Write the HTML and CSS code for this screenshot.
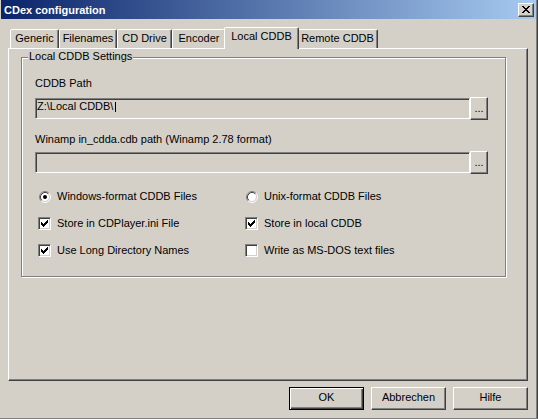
FILE: index.html
```html
<!DOCTYPE html>
<html>
<head>
<meta charset="utf-8">
<title>CDex configuration</title>
<link rel="stylesheet" href="styles.css">
</head>
<body>
<div class="window">
  <div class="titlebar">
    <span class="title">CDex configuration</span>
    <span class="close">
      <svg width="14" height="12" viewBox="0 0 14 12" shape-rendering="crispEdges">
        <path d="M3 2h2v1h1v1h2v-1h1v-1h2v1h-1v1h-1v1h-1v1h1v1h1v1h1v1h-2v-1h-1v-1h-2v1h-1v1h-2v-1h1v-1h1v-1h1v-1h-1v-1h-1v-1h-1z" fill="#000"/>
      </svg>
    </span>
  </div>
  <div class="content">
    <div class="tabs">
      <div class="tab w-gen">Generic</div>
      <div class="tab w-fil">Filenames</div>
      <div class="tab w-cdd">CD Drive</div>
      <div class="tab w-enc">Encoder</div>
      <div class="tab w-loc active">Local CDDB</div>
      <div class="tab w-rem">Remote CDDB</div>
    </div>
    <div class="panel">
      <div class="group">
        <div class="caption">Local CDDB Settings</div>
        <div class="label first">CDDB Path</div>
        <div class="pathrow">
          <div class="field">Z:\Local CDDB\<span class="caret"></span></div>
          <div class="browse">...</div>
        </div>
        <div class="label second">Winamp in_cdda.cdb path (Winamp 2.78 format)</div>
        <div class="pathrow tight">
          <div class="field"></div>
          <div class="browse">...</div>
        </div>
        <div class="options">
          <div class="opt">
            <svg class="radio" width="12" height="12" viewBox="0 0 12 12">
              <circle cx="6" cy="6" r="4.5" fill="#fff"/>
              <path d="M2.11 9.89 A5.5 5.5 0 0 1 9.89 2.11" fill="none" stroke="#808080" stroke-width="1"/>
              <path d="M9.89 2.11 A5.5 5.5 0 0 1 2.11 9.89" fill="none" stroke="#fff" stroke-width="1"/>
              <path d="M2.82 9.18 A4.5 4.5 0 0 1 9.18 2.82" fill="none" stroke="#404040" stroke-width="1"/>
              <path d="M9.18 2.82 A4.5 4.5 0 0 1 2.82 9.18" fill="none" stroke="#D4D0C8" stroke-width="1"/>
              <circle cx="6" cy="6" r="2" fill="#000"/>
            </svg>
            <span>Windows-format CDDB Files</span>
          </div>
          <div class="opt">
            <svg class="radio" width="12" height="12" viewBox="0 0 12 12">
              <circle cx="6" cy="6" r="4.5" fill="#fff"/>
              <path d="M2.11 9.89 A5.5 5.5 0 0 1 9.89 2.11" fill="none" stroke="#808080" stroke-width="1"/>
              <path d="M9.89 2.11 A5.5 5.5 0 0 1 2.11 9.89" fill="none" stroke="#fff" stroke-width="1"/>
              <path d="M2.82 9.18 A4.5 4.5 0 0 1 9.18 2.82" fill="none" stroke="#404040" stroke-width="1"/>
              <path d="M9.18 2.82 A4.5 4.5 0 0 1 2.82 9.18" fill="none" stroke="#D4D0C8" stroke-width="1"/>
            </svg>
            <span>Unix-format CDDB Files</span>
          </div>
          <div class="opt">
            <span class="check">
              <svg width="7" height="7" viewBox="0 0 7 7" shape-rendering="crispEdges"><path d="M6 0h1v3h-1v1h-1v1h-1v1h-1v1h-1v-1h-1v-1h-1v-3h1v1h1v1h1v-1h1v-1h1v-1h1z" fill="#000"/></svg>
            </span>
            <span>Store in CDPlayer.ini File</span>
          </div>
          <div class="opt">
            <span class="check">
              <svg width="7" height="7" viewBox="0 0 7 7" shape-rendering="crispEdges"><path d="M6 0h1v3h-1v1h-1v1h-1v1h-1v1h-1v-1h-1v-1h-1v-3h1v1h1v1h1v-1h1v-1h1v-1h1z" fill="#000"/></svg>
            </span>
            <span>Store in local CDDB</span>
          </div>
          <div class="opt">
            <span class="check">
              <svg width="7" height="7" viewBox="0 0 7 7" shape-rendering="crispEdges"><path d="M6 0h1v3h-1v1h-1v1h-1v1h-1v1h-1v-1h-1v-1h-1v-3h1v1h1v1h1v-1h1v-1h1v-1h1z" fill="#000"/></svg>
            </span>
            <span>Use Long Directory Names</span>
          </div>
          <div class="opt">
            <span class="check"></span>
            <span>Write as MS-DOS text files</span>
          </div>
        </div>
      </div>
    </div>
    <div class="buttons">
      <div class="btn default">OK</div>
      <div class="btn">Abbrechen</div>
      <div class="btn">Hilfe</div>
    </div>
  </div>
</div>
</body>
</html>
```
FILE: styles.css
```css
* { box-sizing: border-box; }
html, body { margin: 0; padding: 0; }
body {
  width: 538px;
  height: 419px;
  overflow: hidden;
  background: #D4D0C8;
  color: #000;
  font-family: "Liberation Sans", Arial, sans-serif;
  font-size: 11px;
  line-height: 13px;
}
.window {
  width: 538px;
  height: 419px;
  display: flex;
  flex-direction: column;
  padding-left: 1px;
  padding-right: 1px;
  border-right: 1px solid #404040;
  border-bottom: 1px solid #808080;
  box-shadow: inset -1px 0 0 #808080;
}
.titlebar {
  height: 19px;
  flex: none;
  display: flex;
  align-items: center;
  justify-content: space-between;
  padding: 1px 2px 0 3px;
  background: linear-gradient(to right, #0A246A, #A6CAF0);
}
.title {
  color: #fff;
  font-weight: bold;
  font-size: 11px;
  line-height: 13px;
}
.close {
  width: 16px;
  height: 14px;
  display: flex;
  align-items: center;
  justify-content: center;
  background: #D4D0C8;
  border: 1px solid;
  border-color: #fff #404040 #404040 #fff;
  box-shadow: inset -1px -1px 0 #808080;
  margin-top: -1px;
}
.close svg { display: block; }
.content {
  flex: 1;
  display: flex;
  flex-direction: column;
  padding: 8px 8px 8px 7px;
}
.tabs {
  height: 21px;
  flex: none;
  display: flex;
  align-items: flex-end;
  padding-left: 2px;
}
.tab {
  height: 19px;
  border: 1px solid;
  border-bottom: none;
  border-color: #fff #404040 transparent #fff;
  border-radius: 2px 2px 0 0;
  box-shadow: inset -1px 0 0 #808080;
  text-align: center;
  padding-top: 2px;
  white-space: nowrap;
  background: #D4D0C8;
}
.tab.active {
  height: 22px;
  margin: 0 -2px -1px -2px;
  position: relative;
  z-index: 1;
}
.w-gen { width: 49px; }
.w-fil { width: 58px; }
.w-cdd { width: 55px; }
.w-enc { width: 54px; }
.w-loc { width: 71px; }
.w-loc.active { width: 75px; }
.w-rem { width: 81px; }
.panel {
  flex: 1;
  border: 1px solid;
  border-color: #fff #404040 #404040 #fff;
  box-shadow: inset -1px -1px 0 #808080;
  padding: 8px 21px 0 12px;
}
.group {
  border: 1px solid #808080;
  box-shadow: 1px 1px 0 #fff, inset 1px 1px 0 #fff;
  padding: 0 17px 19px 13px;
}
.caption {
  width: fit-content;
  margin: -8px 0 0 -7px;
  padding: 0 1px;
  background: #D4D0C8;
}
.label.first { margin-top: 14px; }
.label.second { margin-top: 13px; }
.pathrow {
  height: 23px;
  display: flex;
  align-items: center;
  margin-top: 7px;
}
.pathrow.tight { margin-top: 5px; }
.field {
  flex: 1;
  height: 21px;
  border: 1px solid;
  border-color: #808080 #fff #fff #808080;
  box-shadow: inset 1px 1px 0 #404040, inset -1px -1px 0 #D4D0C8;
  padding: 1px 1px 0 1px;
  white-space: nowrap;
  display: flex;
  align-items: flex-start;
}
.caret {
  display: inline-block;
  width: 1px;
  height: 10px;
  background: #000;
  margin: 2px 0 0 2px;
}
.browse {
  width: 18px;
  height: 23px;
  flex: none;
  display: flex;
  align-items: center;
  justify-content: center;
  border: 1px solid;
  border-color: #fff #404040 #404040 #fff;
  box-shadow: inset -1px -1px 0 #808080;
}
.options {
  margin-top: 16px;
  padding-left: 3px;
  display: grid;
  grid-template-columns: 207px 1fr;
  grid-auto-rows: 13px;
  row-gap: 14px;
}
.opt {
  display: flex;
  align-items: center;
  gap: 6px;
  white-space: nowrap;
}
.radio {
  display: block;
  margin-left: 1px;
  flex: none;
}
.check {
  width: 13px;
  height: 13px;
  flex: none;
  display: flex;
  align-items: center;
  justify-content: center;
  background: #fff;
  border: 1px solid;
  border-color: #808080 #fff #fff #808080;
  box-shadow: inset 1px 1px 0 #404040, inset -1px -1px 0 #D4D0C8;
}
.check svg { display: block; }
.buttons {
  flex: none;
  display: flex;
  justify-content: flex-end;
  gap: 7px;
  margin-top: 6px;
}
.btn {
  width: 75px;
  height: 23px;
  display: flex;
  align-items: center;
  justify-content: center;
  padding-bottom: 2px;
  border: 1px solid;
  border-color: #fff #404040 #404040 #fff;
  box-shadow: inset -1px -1px 0 #808080;
}
.btn.default {
  border-color: #000;
  box-shadow: inset 1px 1px 0 #fff, inset -1px -1px 0 #404040, inset -2px -2px 0 #808080;
}
```
